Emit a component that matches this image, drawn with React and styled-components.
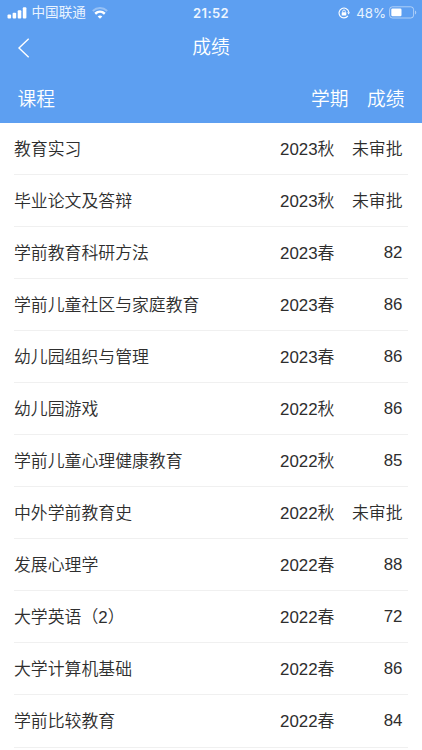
import React from 'react'
import styled, { createGlobalStyle } from 'styled-components';

const GlobalStyle = createGlobalStyle`
    * {
        box-sizing: border-box;
    }

    body {
        margin: 0;
        height: 750px;
        overflow: hidden;
        background: #fff;
        color: #333;
        font-family: "Liberation Sans", "Noto Sans CJK SC", sans-serif;
    }
`

const Top = styled.header`
    height: 122.6px;
    background: #5d9ff1;
    color: #fff;
`

const StatusBar = styled.div`
    display: grid;
    grid-template-columns: 1fr auto 1fr;
    align-items: center;
    height: 24px;
    padding: 0 5px 0 7px;
    font-size: 13.5px;
    line-height: 24px;
`

const StatusGroup = styled.div`
    display: flex;
    align-items: center;
    justify-content: ${(props) => (props.$end ? 'flex-end' : 'flex-start')};
    color: #e9f3ff;
    white-space: nowrap;

    svg {
        flex: none;
    }
`

const Carrier = styled.span`
    margin: 0 6px 0 4.5px;
    padding-top: 1px;
    font-size: 13.6px;
`

const Clock = styled.span`
    margin-right: 2px;
    font-family: Inter, "Liberation Sans", sans-serif;
    font-size: 13px;
    font-weight: 600;
    letter-spacing: 0.35px;
    color: #edf5ff;
`

const Percent = styled.span`
    margin: 0 3px 0 6px;
    font-family: Inter, "Liberation Sans", sans-serif;
    font-size: 13.3px;
`

const NavBar = styled.nav`
    display: grid;
    grid-template-columns: 60px 1fr 60px;
    align-items: center;
    height: 48px;
`

const BackButton = styled.button`
    display: flex;
    padding: 0 0 0 17px;
    border: 0;
    background: none;
    color: #fff;
`

const Title = styled.h1`
    margin: 0;
    font-size: 18.75px;
    font-weight: 350;
    line-height: 48px;
    text-align: center;
`

const TableHead = styled.div`
    display: flex;
    align-items: center;
    height: 50.6px;
    padding: 5px 17.5px 0 17.5px;
    font-size: 18.75px;
    font-weight: 350;
    line-height: 50px;
`

const HeadCell = styled.span`
    flex: ${(props) => (props.$grow ? 1 : 'none')};
    margin-left: ${(props) => (props.$gap ? '18.5px' : 0)};
`

const List = styled.ul`
    margin: 0;
    padding: 0 14px;
    list-style: none;
`

const Row = styled.li`
    display: flex;
    align-items: flex-start;
    height: 52.08px;
    padding-right: 5.5px;
    border-bottom: 1px solid #f0f0f0;
    color: #2e2e2e;
    font-size: 16.87px;
    font-weight: 350;
    line-height: 53px;
    white-space: nowrap;
`

const Course = styled.span`
    flex: 1;
`

const Term = styled.span`
    width: 54.5px;
`

// plain numbers sit a little higher than the chinese text
const Score = styled.span`
    width: 68px;
    line-height: ${(props) => (props.$number ? '51px' : '53px')};
    text-align: right;
`

const courses = [
    { name: '教育实习', term: '2023秋', score: '未审批' },
    { name: '毕业论文及答辩', term: '2023秋', score: '未审批' },
    { name: '学前教育科研方法', term: '2023春', score: 82 },
    { name: '学前儿童社区与家庭教育', term: '2023春', score: 86 },
    { name: '幼儿园组织与管理', term: '2023春', score: 86 },
    { name: '幼儿园游戏', term: '2022秋', score: 86 },
    { name: '学前儿童心理健康教育', term: '2022秋', score: 85 },
    { name: '中外学前教育史', term: '2022秋', score: '未审批' },
    { name: '发展心理学', term: '2022春', score: 88 },
    { name: '大学英语（2）', term: '2022春', score: 72 },
    { name: '大学计算机基础', term: '2022春', score: 86 },
    { name: '学前比较教育', term: '2022春', score: 84 },
];

const SignalIcon = () => (
    <svg width="20" height="12" viewBox="0 0 20 12" fill="#fff">
        <rect x="0.5" y="7.6" width="3.6" height="4" rx="1" />
        <rect x="5.6" y="5.8" width="3.6" height="5.8" rx="1" />
        <rect x="10.7" y="3.3" width="3.6" height="8.3" rx="1" />
        <rect x="15.8" y="0.2" width="3.6" height="11.4" rx="1" />
    </svg>
)

// the outer arc is faded, only two bars of wifi
const WifiIcon = () => (
    <svg width="16" height="12" viewBox="0 0 16 12" fill="none">
        <path d="M0.8 3.9C5 0.1 11 0.1 15.2 3.9" stroke="#fff" strokeOpacity="0.35" strokeWidth="2" />
        <path d="M3.2 6.7C6 4.2 10 4.2 12.8 6.7" stroke="#fff" strokeWidth="2.5" />
        <path d="M5.7 9.4C7 8.2 9 8.2 10.3 9.4L8 11.8Z" fill="#fff" />
    </svg>
)

const LockIcon = () => (
    <svg width="12" height="12" viewBox="0 0 12 12" fill="none" stroke="#fff">
        <path d="M9.9 8.9A4.9 4.9 0 1 1 10.8 5.2" strokeWidth="1.1" />
        <path d="M9.2 5.2H12L10.6 7.4Z" fill="#fff" stroke="none" />
        <rect x="3.7" y="5.3" width="4.6" height="3.3" rx="0.4" fill="#fff" stroke="none" />
        <path d="M4.7 5.4V4.3A1.3 1.3 0 0 1 7.3 4.3V5.4" strokeWidth="0.9" />
    </svg>
)

const BatteryIcon = () => (
    <svg width="28" height="13" viewBox="0 0 28 13">
        <rect x="0.6" y="0.8" width="24" height="11.2" rx="2.8" fill="none" stroke="#fff" strokeOpacity="0.5" />
        <rect x="2.3" y="2.5" width="10.2" height="7.8" rx="1.2" fill="#fff" />
        <path d="M26 4.4C27.7 5 27.7 7.8 26 8.4Z" fill="#fff" fillOpacity="0.5" />
    </svg>
)

const BackIcon = () => (
    <svg width="13" height="20" viewBox="0 0 13 20" fill="none" stroke="currentColor" strokeWidth="1.4">
        <path d="M11.7 0.8L2 10L11.7 19.2" />
    </svg>
)

export default function App() {
    return (
        <>
            <GlobalStyle />
            <Top>
                <StatusBar>
                    <StatusGroup>
                        <SignalIcon />
                        <Carrier>中国联通</Carrier>
                        <WifiIcon />
                    </StatusGroup>
                    <Clock>21:52</Clock>
                    <StatusGroup $end>
                        <LockIcon />
                        <Percent>48%</Percent>
                        <BatteryIcon />
                    </StatusGroup>
                </StatusBar>
                <NavBar>
                    <BackButton aria-label="返回">
                        <BackIcon />
                    </BackButton>
                    <Title>成绩</Title>
                </NavBar>
                <TableHead>
                    <HeadCell $grow>课程</HeadCell>
                    <HeadCell>学期</HeadCell>
                    <HeadCell $gap>成绩</HeadCell>
                </TableHead>
            </Top>
            <List>
                {courses.map((item) => (
                    <Row key={item.name}>
                        <Course>{item.name}</Course>
                        <Term>{item.term}</Term>
                        <Score $number={typeof item.score === 'number'}>{item.score}</Score>
                    </Row>
                ))}
            </List>
        </>
    )
}
